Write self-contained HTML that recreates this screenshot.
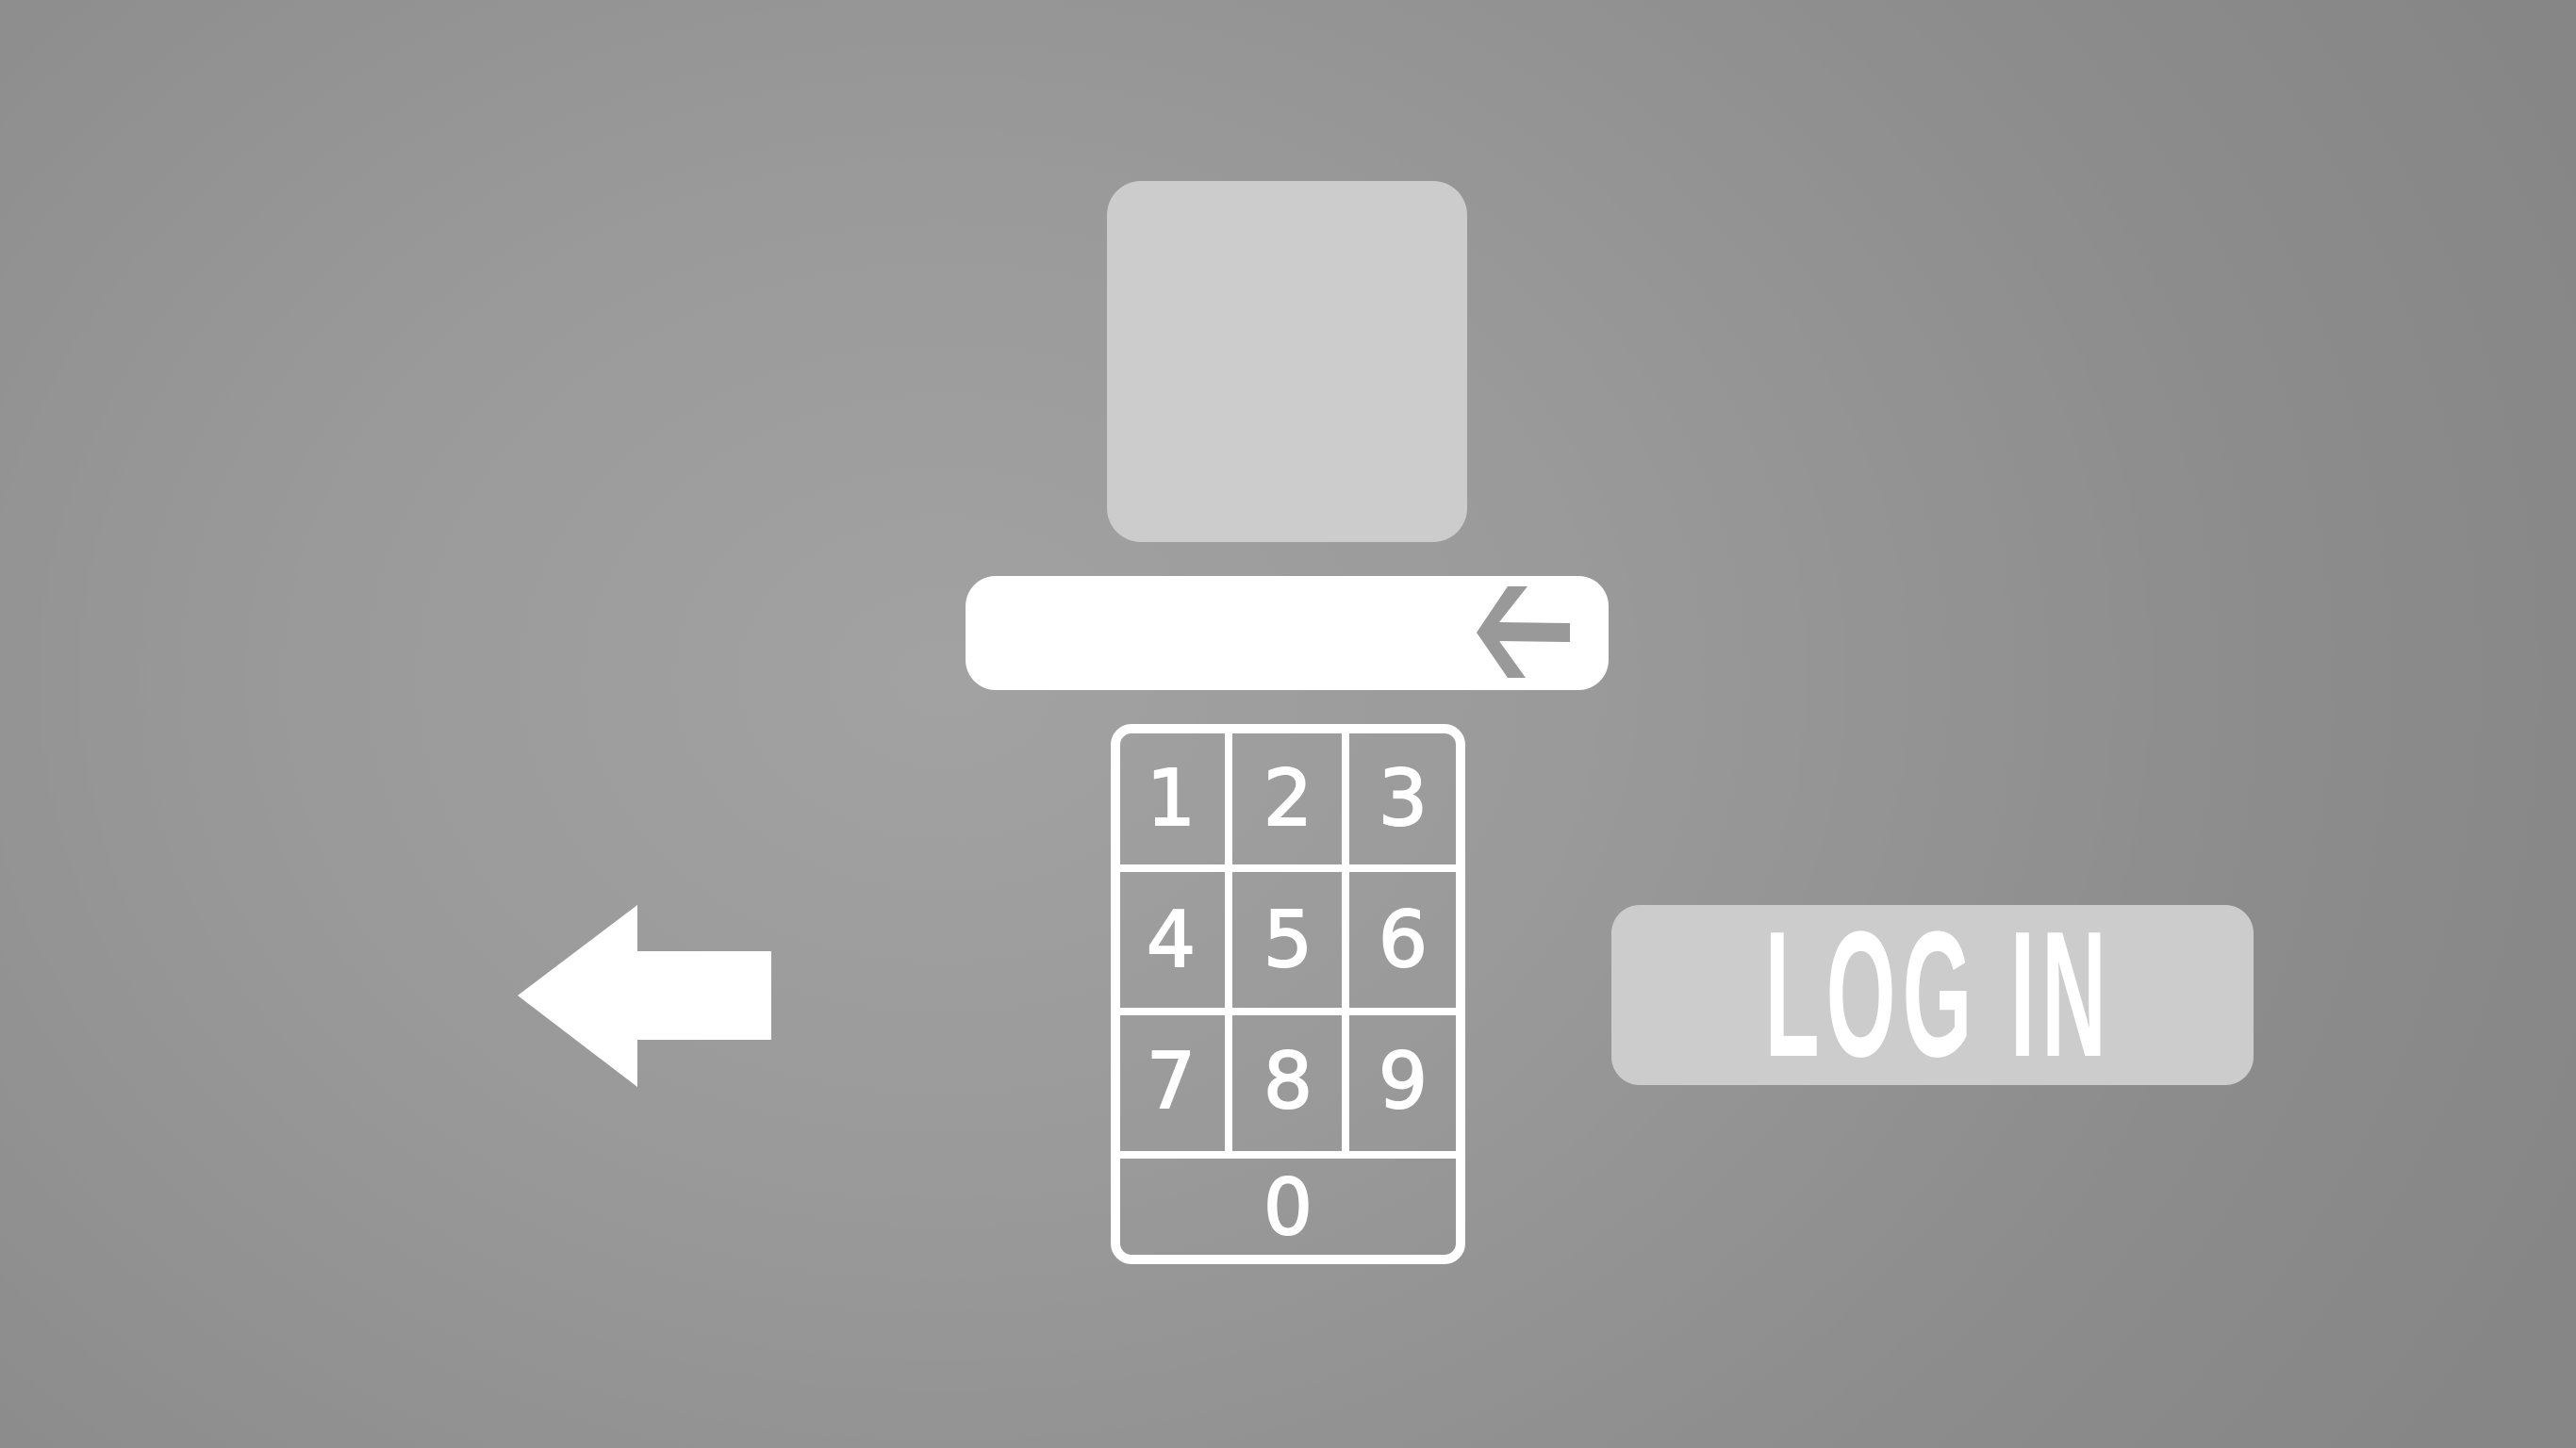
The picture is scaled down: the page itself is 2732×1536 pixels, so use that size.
<!DOCTYPE html>
<html><head><meta charset="utf-8"><style>
html,body{margin:0;padding:0}
body{width:2732px;height:1536px;position:relative;overflow:hidden;
background:radial-gradient(ellipse 1900px 1500px at 1000px 720px,#a2a2a2 0%,#9a9a9a 35%,#8c8c8c 75%,#868686 100%);
font-family:"Liberation Sans",sans-serif}
.sq{position:absolute;left:1174px;top:192px;width:382px;height:383px;background:#cccccc;border-radius:36px}
.bar{position:absolute;left:1024px;top:611px;width:682px;height:121px;background:#fff;border-radius:32px}
.kp{position:absolute;left:1178px;top:768px;width:356px;height:553px;border:10px solid #fff;border-radius:22px}
.v{position:absolute;background:#fff}
.d{position:absolute;color:#fff;font-size:82px;text-align:center;width:120px;line-height:100px;font-family:"DejaVu Sans","Liberation Sans",sans-serif;-webkit-text-stroke:2px #fff}
.btn{position:absolute;left:1709px;top:960px;width:681px;height:191px;background:#cccccc;border-radius:30px}
.lt{position:absolute;left:1709px;top:960px;width:681px;height:191px;text-align:center;color:#fff;font-weight:bold;font-size:190px;line-height:191px;white-space:nowrap}
.lt span{display:inline-block;transform:translateX(-22px) scaleX(0.5);letter-spacing:14px}
</style></head><body>
<div class="sq"></div>
<div class="bar"></div>
<svg style="position:absolute;left:0;top:0" width="2732" height="1536">
<polygon points="1566,671 1599,622 1620,622 1590,660 1665,661 1665,681 1590,680 1618,719 1599,719" fill="#999"/>
<polygon points="549,1056 676,960 676,1009 818,1009 818,1103 676,1103 676,1153" fill="#fff"/>
</svg>
<div class="kp"></div>
<div class="v" style="left:1299px;top:772px;width:8px;height:455px"></div>
<div class="v" style="left:1423px;top:772px;width:8px;height:455px"></div>
<div class="v" style="left:1183px;top:917px;width:366px;height:8px"></div>
<div class="v" style="left:1183px;top:1069px;width:366px;height:8px"></div>
<div class="v" style="left:1183px;top:1221px;width:366px;height:8px"></div>
<div class="d" style="left:1182px;top:798px">1</div>
<div class="d" style="left:1306px;top:798px">2</div>
<div class="d" style="left:1428px;top:798px">3</div>
<div class="d" style="left:1182px;top:948px">4</div>
<div class="d" style="left:1306px;top:948px">5</div>
<div class="d" style="left:1428px;top:948px">6</div>
<div class="d" style="left:1182px;top:1098px">7</div>
<div class="d" style="left:1306px;top:1098px">8</div>
<div class="d" style="left:1428px;top:1098px">9</div>
<div class="d" style="left:1306px;top:1232px">0</div>
<div class="btn"></div>
<div class="lt"><span>LOG IN</span></div>
</body></html>
